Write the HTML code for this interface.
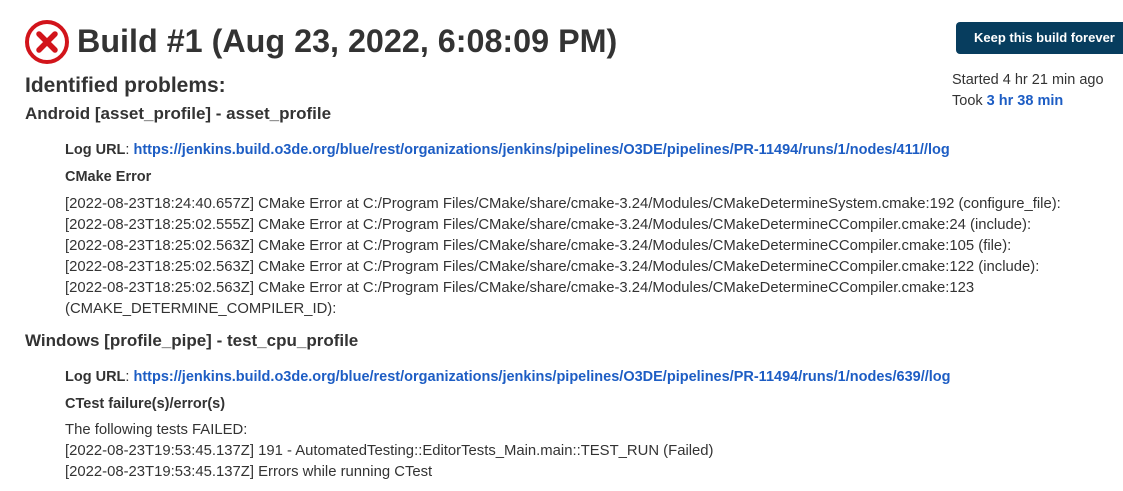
<!DOCTYPE html>
<html><head><meta charset="utf-8"><style>
body{margin:0;background:#fff;font-family:"Liberation Sans",sans-serif;color:#333;width:1123px;height:491px;overflow:hidden;position:relative}
.a{position:absolute;white-space:nowrap}
a{color:#1d5dc4;text-decoration:none;font-weight:bold}
.btn{position:absolute;left:956px;top:22px;width:180px;height:32px;background:#073d5e;border-radius:4px;color:#fff;font-weight:bold;font-size:13px;line-height:32px;padding-left:18px;box-sizing:border-box}
.body{font-size:14.85px;line-height:21px}
</style></head><body>
<svg class="a" style="left:24px;top:19px" width="46" height="46" viewBox="0 0 46 46"><circle cx="23" cy="23" r="20" fill="none" stroke="#d2141b" stroke-width="4"/><path d="M15 15L31 31M31 15L15 31" stroke="#d2141b" stroke-width="5.5" stroke-linecap="round"/></svg>
<div class="a" style="left:77px;top:23px;font-size:32.3px;font-weight:bold">Build #1 (Aug 23, 2022, 6:08:09 PM)</div>
<div class="btn">Keep this build forever</div>
<div class="a" style="left:952px;top:70px;font-size:14.5px;line-height:21px">Started 4 hr 21 min ago<br>Took <a>3 hr 38 min</a></div>
<div class="a" style="left:25px;top:74px;font-size:21px;font-weight:bold">Identified problems:</div>
<div class="a" style="left:25px;top:104px;font-size:17px;font-weight:bold">Android [asset_profile] - asset_profile</div>
<div class="a" style="left:65px;top:142px;font-size:14.5px"><b>Log URL</b>: <a>https://jenkins.build.o3de.org/blue/rest/organizations/jenkins/pipelines/O3DE/pipelines/PR-11494/runs/1/nodes/411//log</a></div>
<div class="a" style="left:65px;top:169px;font-size:14.5px;font-weight:bold">CMake Error</div>
<div class="a body" style="left:65px;top:194px">[2022-08-23T18:24:40.657Z] CMake Error at C:/Program Files/CMake/share/cmake-3.24/Modules/CMakeDetermineSystem.cmake:192 (configure_file):<br>[2022-08-23T18:25:02.555Z] CMake Error at C:/Program Files/CMake/share/cmake-3.24/Modules/CMakeDetermineCCompiler.cmake:24 (include):<br>[2022-08-23T18:25:02.563Z] CMake Error at C:/Program Files/CMake/share/cmake-3.24/Modules/CMakeDetermineCCompiler.cmake:105 (file):<br>[2022-08-23T18:25:02.563Z] CMake Error at C:/Program Files/CMake/share/cmake-3.24/Modules/CMakeDetermineCCompiler.cmake:122 (include):<br>[2022-08-23T18:25:02.563Z] CMake Error at C:/Program Files/CMake/share/cmake-3.24/Modules/CMakeDetermineCCompiler.cmake:123<br>(CMAKE_DETERMINE_COMPILER_ID):</div>
<div class="a" style="left:25px;top:331px;font-size:17px;font-weight:bold">Windows [profile_pipe] - test_cpu_profile</div>
<div class="a" style="left:65px;top:369px;font-size:14.5px"><b>Log URL</b>: <a>https://jenkins.build.o3de.org/blue/rest/organizations/jenkins/pipelines/O3DE/pipelines/PR-11494/runs/1/nodes/639//log</a></div>
<div class="a" style="left:65px;top:396px;font-size:14.5px;font-weight:bold">CTest failure(s)/error(s)</div>
<div class="a body" style="left:65px;top:420px">The following tests FAILED:<br>[2022-08-23T19:53:45.137Z] 191 - AutomatedTesting::EditorTests_Main.main::TEST_RUN (Failed)<br>[2022-08-23T19:53:45.137Z] Errors while running CTest</div>
</body></html>
